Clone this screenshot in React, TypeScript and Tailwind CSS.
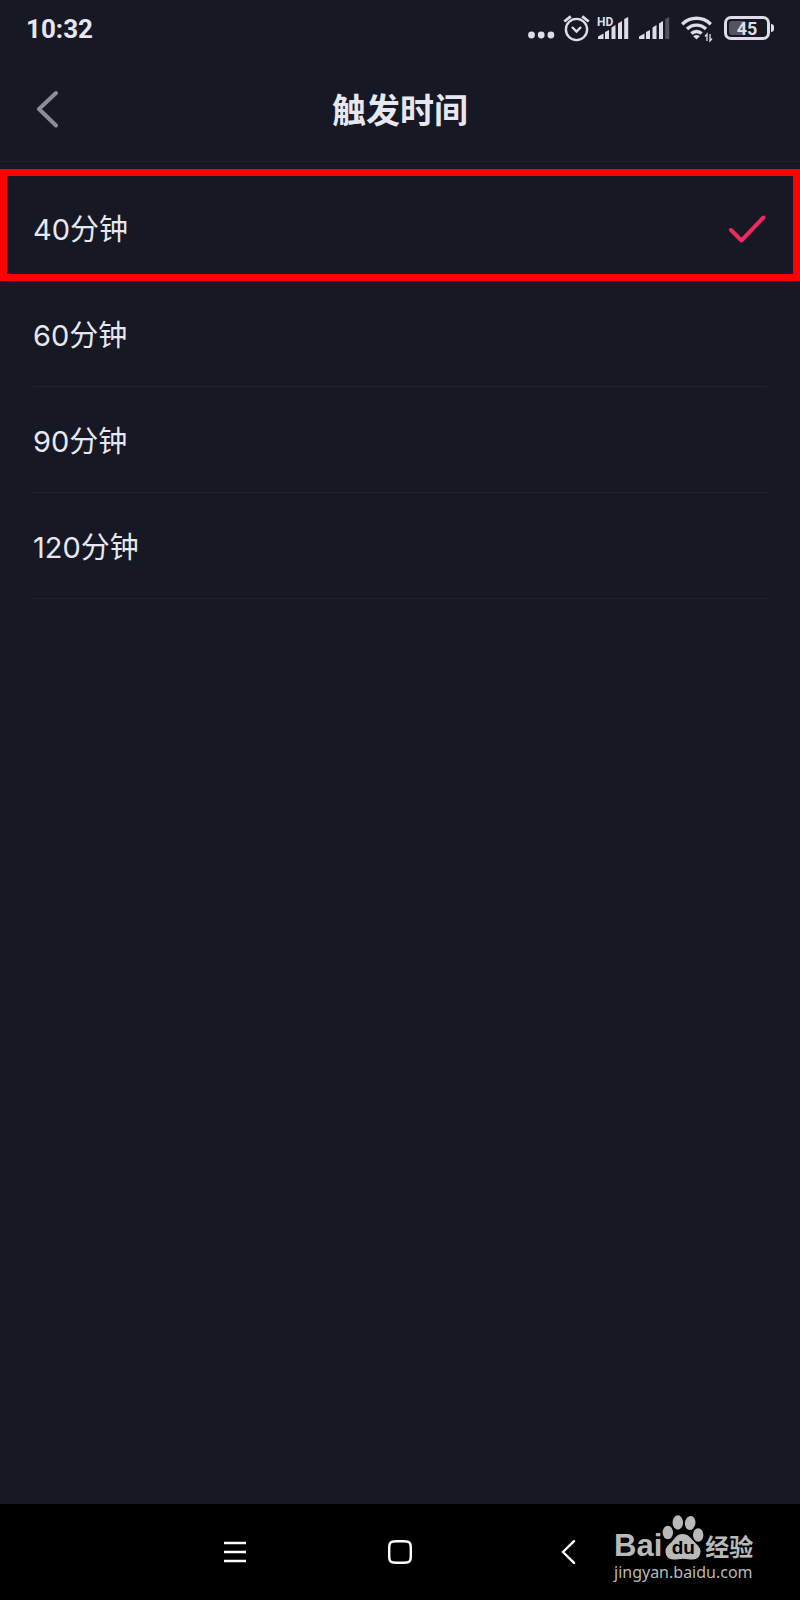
import { useState } from 'react';

interface TriggerOption {
  minutes: number;
  label: string;
}

const options: TriggerOption[] = [
  { minutes: 40, label: '40分钟' },
  { minutes: 60, label: '60分钟' },
  { minutes: 90, label: '90分钟' },
  { minutes: 120, label: '120分钟' },
];

function SignalBars({ weak = false }: { weak?: boolean }) {
  return (
    <svg className="w-[31px] h-8" viewBox="0 0 31 32" fill="currentColor" aria-hidden="true">
      <path d="M0 27v-2.500l5.500-3v5.500z" />
      <path d="M7 27v-7l4-2v9z" />
      <path d="M13.500 27V15.500l4-2.500v14z" />
      <path d="M20 27V11.500l4-2.500v18z" />
      <path d="M26.200 27V7l4-2v22z" opacity={weak ? 0.3 : 1} />
    </svg>
  );
}

function StatusBar() {
  return (
    <div className="h-14 px-[26px] flex items-center justify-between text-[#dcdde8]">
      <span className="pt-0.5 font-['Roboto',sans-serif] text-[26px] leading-8 font-bold text-[#e6e7f2]">10:32</span>

      <div className="flex items-center">
        <svg className="w-[27px] h-8" viewBox="0 0 27 32" fill="currentColor" aria-hidden="true">
          <circle cx="3.500" cy="23" r="3.400" />
          <circle cx="13.200" cy="23" r="3.400" />
          <circle cx="22.900" cy="23" r="3.400" />
        </svg>

        {/* Alarm */}
        <svg className="ml-2 w-[27px] h-8" viewBox="0 0 27 32" fill="none" stroke="currentColor" strokeWidth="2.400" aria-hidden="true">
          <circle cx="13.500" cy="17.500" r="10.600" />
          <path d="M9 15l4.500 4.500L18 15" />
          <path d="M1.300 9.500L7.800 4.300M25.700 9.500L19.200 4.300" strokeWidth="2.800" />
        </svg>

        <div className="relative ml-2">
          <SignalBars />
          <span className="absolute left-0 top-1 -translate-x-px font-['Roboto',sans-serif] text-[12px] leading-3 font-bold">HD</span>
        </div>
        <div className="ml-[10px]">
          <SignalBars weak />
        </div>

        {/* Wifi with traffic arrows */}
        <svg className="ml-[11px] w-8 h-8" viewBox="0 0 32 32" fill="none" stroke="currentColor" aria-hidden="true">
          <path d="M1.200 12.200C9.500 4.300 21.500 4.300 29.800 12.200" strokeWidth="3.400" />
          <path d="M6 17C11.500 11.800 19.500 11.800 25 17" strokeWidth="3.400" />
          <path d="M10.400 21.500C13.200 18.800 17.800 18.800 20.600 21.500" strokeWidth="3.400" />
          <path d="M15.500 27.500l-3.300-3.200c1.800-1.600 4.800-1.600 6.600 0z" fill="currentColor" stroke="none" />
          <path d="M26 29v-7l-2 2.500M29 22v7l2-2.500" strokeWidth="1.300" />
        </svg>

        {/* Battery */}
        <div className="ml-[11px] flex items-center">
          <div className="w-[46px] h-6 rounded-[7px] border-3 border-current p-0.5 flex">
            <div className="w-full h-full rounded-[3px] bg-linear-to-r from-[#53545f] from-45% to-transparent to-45% flex items-center justify-center">
              <span className="pt-0.5 font-['Roboto',sans-serif] text-[18px] leading-4 font-bold">45</span>
            </div>
          </div>
          <div className="ml-px w-[3px] h-2 rounded-r-sm bg-current" />
        </div>
      </div>
    </div>
  );
}

function Watermark() {
  return (
    <div className="absolute right-11 bottom-4 w-[142px] text-[#b9b9b9]">
      <div className="flex items-end h-[46px]">
        <span className="font-['Liberation_Sans',sans-serif] text-[31px] leading-7 font-bold">Bai</span>
        <div className="relative shrink-0">
          <svg className="w-[42px] h-[46px]" viewBox="0 0 42 46" fill="currentColor" aria-hidden="true">
            <ellipse cx="5.800" cy="18.500" rx="5.200" ry="6.800" />
            <ellipse cx="15.800" cy="8.500" rx="5.200" ry="7.200" />
            <ellipse cx="28.200" cy="9" rx="5.200" ry="7" transform="rotate(8 28.200 9)" />
            <ellipse cx="36.200" cy="21" rx="5.200" ry="6.800" />
            <path d="M20.500 20c-6 0-7.500 4.500-11 8C5 32 3.500 34 3.500 37.500c0 5 3.500 8 8 8 3.500 0 6-.8 9.500-.8s6 .8 9.500.8c4.500 0 8-3 8-8 0-3.500-2-5.500-6-9.500C29 24.500 26.500 20 20.500 20z" />
          </svg>
          <span className="absolute inset-x-0 bottom-0.5 text-center font-['Liberation_Sans',sans-serif] text-[19px] leading-5 font-bold text-black">du</span>
        </div>
        <span className="shrink-0 pl-px font-['Liberation_Sans','Noto_Sans_CJK_SC',sans-serif] text-[24px] leading-6 font-bold">经验</span>
      </div>
      <p className="font-['Noto_Sans',sans-serif] text-[16px] leading-6">jingyan.baidu.com</p>
    </div>
  );
}

export default function App() {
  const [selected, setSelected] = useState(40);

  return (
    <div className="min-h-screen flex flex-col bg-[#161823] text-[#e6e7f0] font-['Inter','Noto_Sans_CJK_SC',sans-serif]">
      <StatusBar />

      <header className="relative h-[106px] flex items-center justify-center border-b border-[#20232e]">
        <button type="button" aria-label="返回" className="absolute left-9 top-8 text-[#8c8d97]">
          <svg className="w-6 h-10" viewBox="0 0 24 40" fill="none" stroke="currentColor" strokeWidth="4" strokeLinecap="round" strokeLinejoin="round">
            <path d="M20 5L3 21l17 16.500" />
          </svg>
        </button>
        <h1 className="font-['Noto_Sans_CJK_SC',sans-serif] text-[34px] leading-10 font-bold">触发时间</h1>
      </header>

      <main className="mt-[7px] grow">
        {options.map(option => {
          const checked = option.minutes === selected;
          return (
            <label
              key={option.minutes}
              className={`flex cursor-pointer ${
                checked ? 'h-28 border-7 border-[#ff0000] px-[26px] pt-1.5' : 'h-[106px] px-[33px]'
              }`}
            >
              <input
                type="radio"
                name="trigger-time"
                className="sr-only"
                checked={checked}
                onChange={() => setSelected(option.minutes)}
              />
              <span className={`grow flex items-center justify-between ${checked ? '' : 'border-b border-[#20232e]'}`}>
                <span className="pt-1 text-[29px] leading-10">{option.label}</span>
                {checked && (
                  <svg className="w-10 h-8 text-[#f0295c]" viewBox="0 0 40 32" fill="none" stroke="currentColor" strokeWidth="4" strokeLinecap="round" strokeLinejoin="round" aria-hidden="true">
                    <path d="M4 18l10.500 10.500L36.500 5.500" />
                  </svg>
                )}
              </span>
            </label>
          );
        })}
      </main>

      {/* System navigation */}
      <nav className="relative h-24 bg-black flex items-center justify-center gap-[142px] text-white">
        <button type="button" aria-label="菜单">
          <svg className="w-6 h-6" viewBox="0 0 24 24" stroke="currentColor" strokeWidth="2.400">
            <path d="M2 3h22M2 12h22M2 21h22" />
          </svg>
        </button>
        <button type="button" aria-label="主页">
          <svg className="w-6 h-6" viewBox="0 0 24 24" fill="none" stroke="currentColor" strokeWidth="2.400">
            <path d="M12 1.200h4c5.500 0 6.800 1.300 6.800 6.800v8c0 5.500-1.300 6.800-6.800 6.800H8c-5.500 0-6.800-1.300-6.800-6.800V8c0-5.500 1.300-6.800 6.800-6.800z" />
          </svg>
        </button>
        <button type="button" aria-label="后退">
          <svg className="w-6 h-6" viewBox="0 0 24 24" fill="none" stroke="currentColor" strokeWidth="2.400" strokeLinecap="round">
            <path d="M20 1.200L9 12l11 10.800" />
          </svg>
        </button>
        <Watermark />
      </nav>
    </div>
  );
}
